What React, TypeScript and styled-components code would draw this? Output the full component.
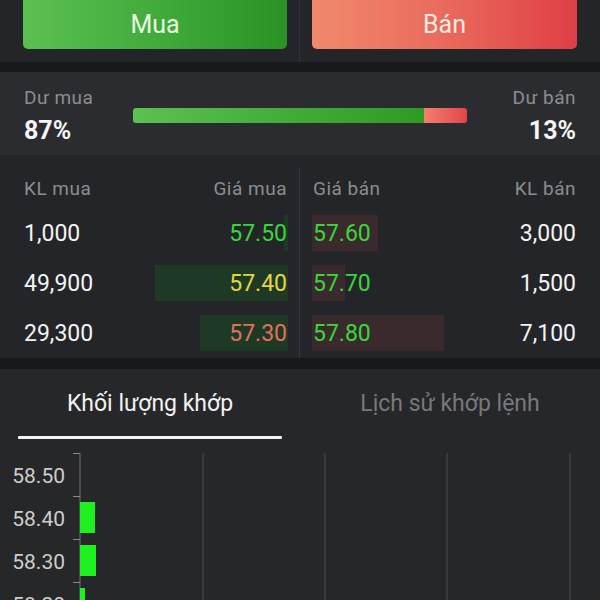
import React from "react";
import styled, { createGlobalStyle } from "styled-components";

const GlobalStyle = createGlobalStyle`
  html, body {
    margin: 0;
    padding: 0;
    background: #262729;
  }
  body {
    font-family: "Roboto", "Noto Sans", sans-serif;
    -webkit-font-smoothing: antialiased;
  }
  * { box-sizing: border-box; }
`;

const Screen = styled.div`
  width: 600px;
  height: 600px;
  overflow: hidden;
  display: flex;
  flex-direction: column;
  background: #17191c;
`;

/* ---------- Action buttons ---------- */
const ActionBar = styled.div`
  display: grid;
  grid-template-columns: 1fr 1fr;
  height: 62px;
  background: #232528;
  flex-shrink: 0;
`;

const ActionCell = styled.div<{ $side: "buy" | "sell" }>`
  padding: ${(p) => (p.$side === "buy" ? "0 12px 13px 23px" : "0 23px 13px 12px")};
  border-right: ${(p) => (p.$side === "buy" ? "1px solid #2e3135" : "none")};
`;

const ActionButton = styled.button<{ $side: "buy" | "sell" }>`
  display: block;
  width: 100%;
  height: 57px;
  margin-top: -8px;
  padding: 8px 0 0;
  border: none;
  border-radius: 5px;
  font-family: "Roboto", sans-serif;
  font-size: 25px;
  line-height: 49px;
  text-align: center;
  color: ${(p) => (p.$side === "buy" ? "#eafbe2" : "#fdebe4")};
  background: ${(p) =>
    p.$side === "buy"
      ? "linear-gradient(90deg, #5cbf52 0%, #3fa93a 55%, #2a9224 100%)"
      : "linear-gradient(90deg, #f08a6c 0%, #e96a5c 50%, #df3f45 100%)"};
`;

const Band = styled.div<{ $h: number }>`
  height: ${(p) => p.$h}px;
  background: #17191c;
  flex-shrink: 0;
`;

/* ---------- Summary ---------- */
const Summary = styled.div`
  display: grid;
  grid-template-columns: 1fr 334px 1fr;
  align-items: center;
  padding: 15px 24px 9px;
  background: #2a2c30;
  flex-shrink: 0;
`;

const SummaryBlock = styled.div<{ $align: "left" | "right" }>`
  text-align: ${(p) => p.$align};
`;

const MutedLabel = styled.div`
  font-size: 19px;
  line-height: 22px;
  letter-spacing: 0.5px;
  color: #8b8d90;
  white-space: nowrap;
`;

const BigValue = styled.div`
  margin-top: 7px;
  font-size: 25px;
  line-height: 30px;
  font-weight: 700;
  color: #f6f6f6;
`;

const RatioBar = styled.div`
  display: flex;
  height: 15px;
  border-radius: 3px;
  overflow: hidden;
  margin-top: -3px;
`;

const RatioPart = styled.div<{ $side: "buy" | "sell" }>`
  height: 100%;
  background: ${(p) =>
    p.$side === "buy"
      ? "linear-gradient(90deg, #5bc150 0%, #2e9a25 100%)"
      : "linear-gradient(90deg, #f3806e 0%, #e2444a 100%)"};
`;

/* ---------- Order book ---------- */
const Book = styled.div`
  display: grid;
  grid-template-columns: 1fr 1fr;
  padding-top: 13px;
  background: #232528;
  flex-shrink: 0;
`;

const BookSide = styled.div<{ $side: "buy" | "sell" }>`
  padding-top: 10px;
  border-right: ${(p) => (p.$side === "buy" ? "1px solid #34373b" : "none")};
`;

const BookHeader = styled.div<{ $side: "buy" | "sell" }>`
  display: flex;
  justify-content: space-between;
  padding: ${(p) => (p.$side === "buy" ? "0 12px 0 24px" : "0 24px 0 13px")};
  margin-bottom: 8px;
`;

const BookRow = styled.div<{ $side: "buy" | "sell"; $depth: number }>`
  display: flex;
  justify-content: space-between;
  align-items: center;
  height: 50px;
  padding: ${(p) => (p.$side === "buy" ? "2px 12px 0 24px" : "2px 24px 0 13px")};
  background-image: linear-gradient(
    ${(p) => (p.$side === "buy" ? "#1e3a25, #1e3a25" : "#3a2a2d, #3a2a2d")}
  );
  background-repeat: no-repeat;
  background-position: ${(p) =>
    p.$side === "buy" ? "right 11px center" : "left 12px center"};
  background-size: ${(p) => p.$depth}px 36px;
`;

const Volume = styled.span`
  font-size: 23px;
  line-height: 48px;
  color: #f3f3f3;
`;

const Price = styled.span<{ $tone: "up" | "ref" | "down" }>`
  font-size: 23px;
  line-height: 48px;
  color: ${(p) =>
    p.$tone === "up" ? "#36d83a" : p.$tone === "ref" ? "#e6d63c" : "#e2705f"};
`;

/* ---------- Tabs + chart ---------- */
const Lower = styled.div`
  flex: 1;
  background: #262729;
  display: flex;
  flex-direction: column;
`;

const Tabs = styled.div`
  display: grid;
  grid-template-columns: 1fr 1fr;
  flex-shrink: 0;
`;

const Tab = styled.div`
  display: flex;
  flex-direction: column;
`;

const TabLabel = styled.div<{ $active?: boolean }>`
  height: 67px;
  line-height: 69px;
  text-align: center;
  font-size: 23px;
  color: ${(p) => (p.$active ? "#f2f2f2" : "#76787c")};
`;

const TabLine = styled.div<{ $active?: boolean }>`
  height: 3px;
  margin: 0 18px;
  border-radius: 1px;
  background: ${(p) => (p.$active ? "#f4f4f4" : "transparent")};
`;

const ChartSvg = styled.svg`
  display: block;
  flex-shrink: 0;
  margin-top: 1px;
`;

const buyRows = [
  { vol: "1,000", price: "57.50", tone: "up" as const, depth: 4 },
  { vol: "49,900", price: "57.40", tone: "ref" as const, depth: 133 },
  { vol: "29,300", price: "57.30", tone: "down" as const, depth: 88 },
];

const sellRows = [
  { vol: "3,000", price: "57.60", tone: "up" as const, depth: 66 },
  { vol: "1,500", price: "57.70", tone: "up" as const, depth: 33 },
  { vol: "7,100", price: "57.80", tone: "up" as const, depth: 132 },
];

const levels = ["58.50", "58.40", "58.30", "58.20"];
const bars = [0, 15, 16, 5];
const gridX = [203, 325, 447, 570];

function Chart() {
  const top = 13;
  const step = 43;
  return (
    <ChartSvg width={600} height={160} viewBox="0 0 600 160">
      {gridX.map((x) => (
        <line key={x} x1={x} y1={top} x2={x} y2={160} stroke="#3d4044" strokeWidth={1.5} />
      ))}
      <line x1={80} y1={top} x2={80} y2={160} stroke="#6f7174" strokeWidth={1} />
      {levels.map((lv, i) => {
        const y = top + step * i;
        return (
          <g key={lv}>
            <line x1={73} y1={y + 0.5} x2={80} y2={y + 0.5} stroke="#8a8c8f" strokeWidth={1} />
            <text
              x={65}
              y={y + 30}
              textAnchor="end"
              fontFamily="Roboto, sans-serif"
              fontSize={21}
              fill="#cdcdcd"
            >
              {lv}
            </text>
            {bars[i] > 0 && (
              <rect x={80} y={y + 6} width={bars[i]} height={31} fill="#1ff01f" />
            )}
          </g>
        );
      })}
    </ChartSvg>
  );
}

export default function App() {
  return (
    <>
      <GlobalStyle />
      <Screen>
        <ActionBar>
          <ActionCell $side="buy">
            <ActionButton $side="buy">Mua</ActionButton>
          </ActionCell>
          <ActionCell $side="sell">
            <ActionButton $side="sell">Bán</ActionButton>
          </ActionCell>
        </ActionBar>
        <Band $h={10} />
        <Summary>
          <SummaryBlock $align="left">
            <MutedLabel>Dư mua</MutedLabel>
            <BigValue>87%</BigValue>
          </SummaryBlock>
          <RatioBar>
            <RatioPart $side="buy" style={{ width: "87%" }} />
            <RatioPart $side="sell" style={{ width: "13%" }} />
          </RatioBar>
          <SummaryBlock $align="right">
            <MutedLabel>Dư bán</MutedLabel>
            <BigValue>13%</BigValue>
          </SummaryBlock>
        </Summary>
        <Book>
          <BookSide $side="buy">
            <BookHeader $side="buy">
              <MutedLabel>KL mua</MutedLabel>
              <MutedLabel>Giá mua</MutedLabel>
            </BookHeader>
            {buyRows.map((r) => (
              <BookRow key={r.price} $side="buy" $depth={r.depth}>
                <Volume>{r.vol}</Volume>
                <Price $tone={r.tone}>{r.price}</Price>
              </BookRow>
            ))}
          </BookSide>
          <BookSide $side="sell">
            <BookHeader $side="sell">
              <MutedLabel>Giá bán</MutedLabel>
              <MutedLabel>KL bán</MutedLabel>
            </BookHeader>
            {sellRows.map((r) => (
              <BookRow key={r.price} $side="sell" $depth={r.depth}>
                <Price $tone={r.tone}>{r.price}</Price>
                <Volume>{r.vol}</Volume>
              </BookRow>
            ))}
          </BookSide>
        </Book>
        <Band $h={11} />
        <Lower>
          <Tabs>
            <Tab>
              <TabLabel $active>Khối lượng khớp</TabLabel>
              <TabLine $active />
            </Tab>
            <Tab>
              <TabLabel>Lịch sử khớp lệnh</TabLabel>
              <TabLine />
            </Tab>
          </Tabs>
          <Chart />
        </Lower>
      </Screen>
    </>
  );
}
